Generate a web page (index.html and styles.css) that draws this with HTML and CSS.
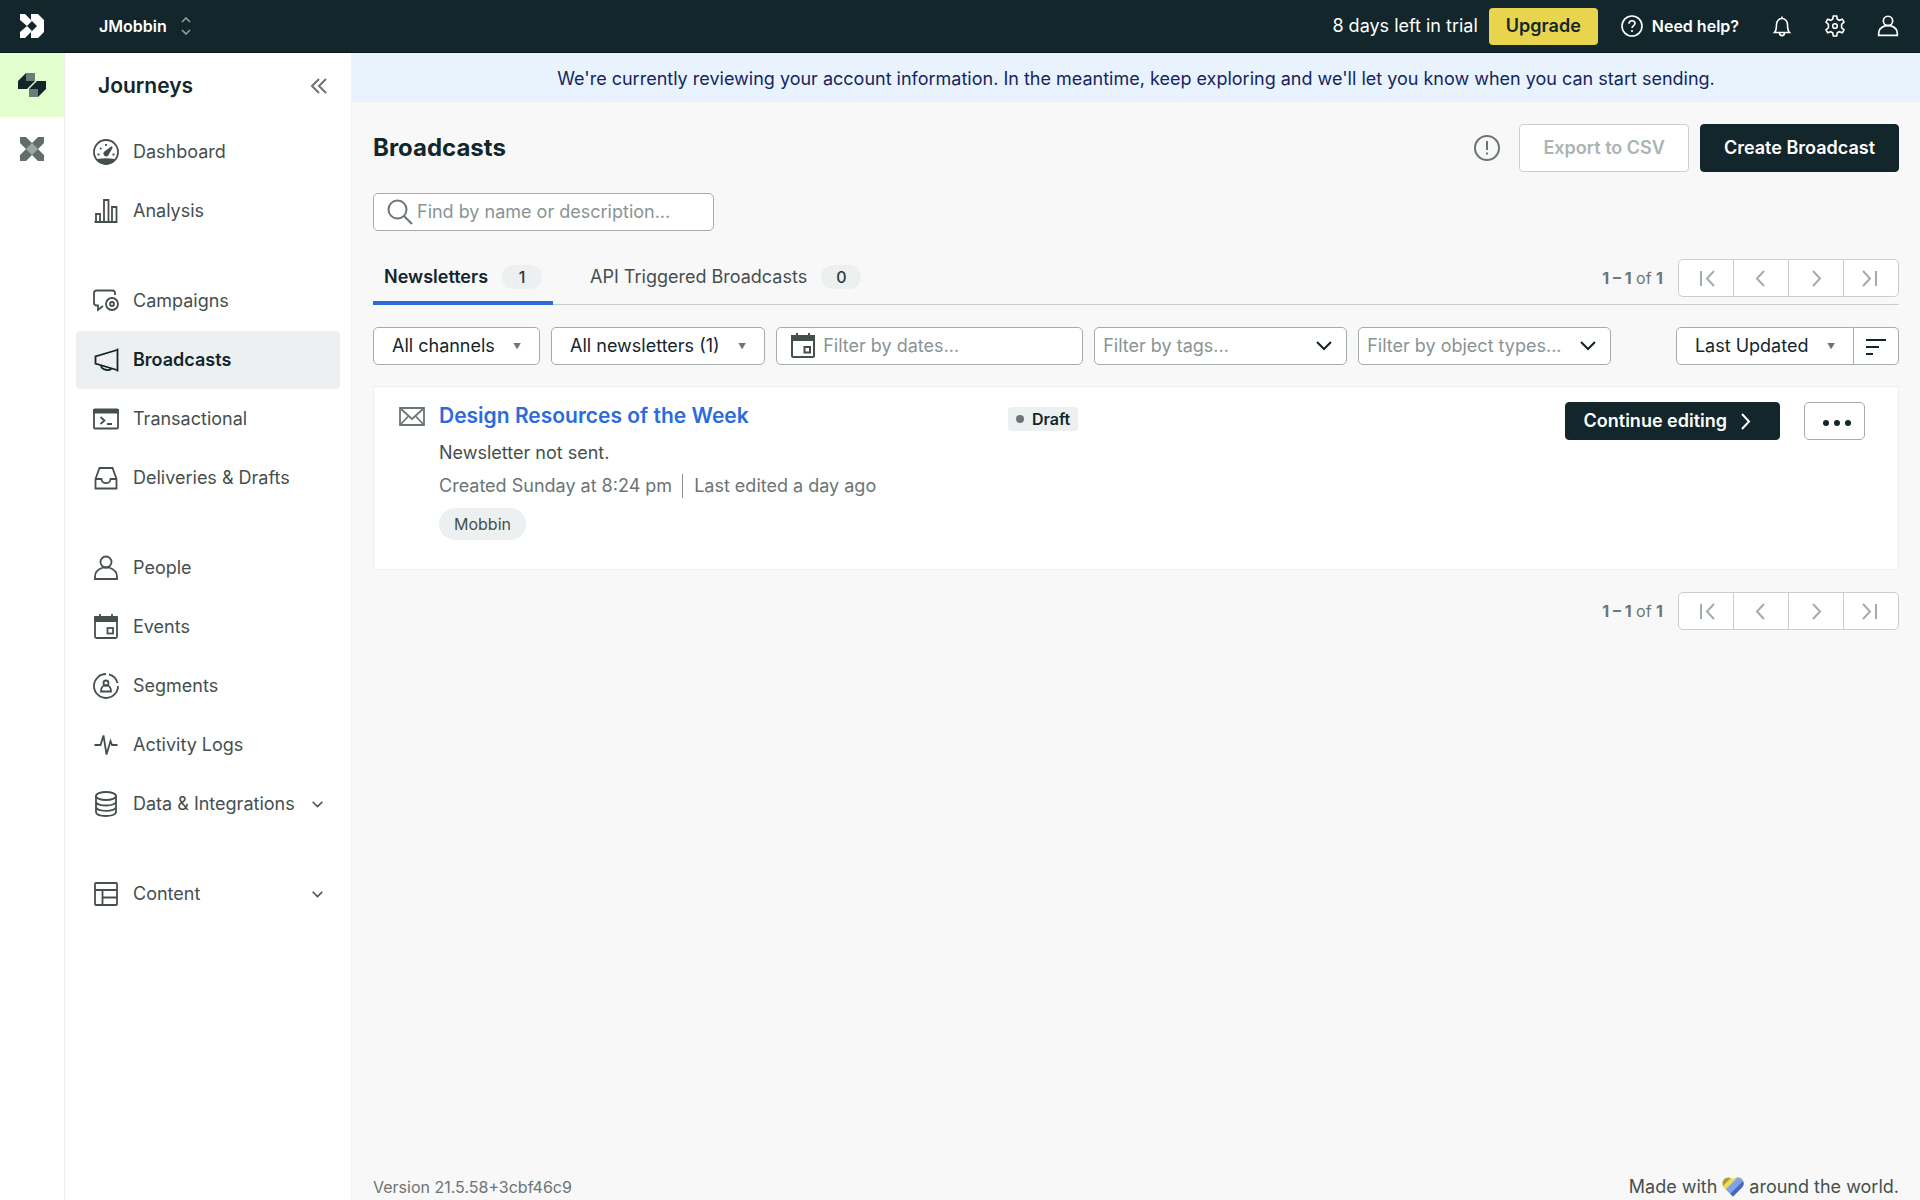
FILE: index.html
```html
<!DOCTYPE html>
<html lang="en">
<head>
  <meta charset="UTF-8" />
  <meta name="viewport" content="width=device-width, initial-scale=1" />
  <title>Broadcasts | Journeys</title>
  <link rel="stylesheet" href="styles.css">
</head>
<body>

  <!-- Shared icons -->
  <svg class="sprite" aria-hidden="true">
    <symbol id="i-person" viewBox="0 0 26 26"><circle cx="13" cy="7" r="5.500"/><path d="M2 24v-2.500c0-4 3.500-7.500 8-9h6c4.500 1.500 8 5 8 9V24z"/></symbol>
    <symbol id="i-calendar" viewBox="0 0 26 26"><rect x="2" y="3" width="22" height="21" rx="1.500"/><path d="M2 3h22v4H2zM7 0v3M19 0v3" fill="currentColor"/><rect x="14.500" y="14" width="5.500" height="5.500"/></symbol>
    <symbol id="i-down" viewBox="0 0 16 16"><path d="M1 4l7 7 7-7"/></symbol>
    <symbol id="i-first" viewBox="0 0 18 18"><path d="M4 2v15M17 2l-7 7.500 7 7.500"/></symbol>
    <symbol id="i-prev" viewBox="0 0 18 18"><path d="M12 2L5 9.500l7 7.500"/></symbol>
    <symbol id="i-next" viewBox="0 0 18 18"><path d="M6 2l7 7.500L6 17"/></symbol>
    <symbol id="i-last" viewBox="0 0 18 18"><path d="M1 2l7 7.500L1 17M14 2v15"/></symbol>
  </svg>

  <header class="topbar">
    <a class="logo" href="#" aria-label="Home">
      <svg width="24" height="24" viewBox="0 0 24 24" fill="currentColor"><path d="M0 0h5l7 7-5 5-7-6z"/><path d="M0 24h5l7-7-5-5-7 6z"/><path d="M11 0h7l6 6v12l-6 6h-7v-6l6-6-6-6z"/></svg>
    </a>
    <button class="workspace" type="button">JMobbin
      <svg class="icon thin" width="10" height="18" viewBox="0 0 10 18"><path d="M1 5l4-4 4 4M1 13l4 4 4-4"/></svg>
    </button>
    <div class="topbar-right">
      <span class="trial">8 days left in trial</span>
      <button class="upgrade" type="button">Upgrade</button>
      <a class="help" href="#">
        <svg class="icon" width="22" height="22" viewBox="0 0 22 22"><circle cx="11" cy="11" r="10"/><path d="M8 8.700c0-1.800 1.200-3 3-3s3 1.100 3 2.700c0 2-3 2.300-3 4.600M11 15v2"/></svg>
        Need help?
      </a>
      <button class="icon-btn" type="button" aria-label="Notifications">
        <svg class="icon" width="22" height="22" viewBox="0 0 22 22"><path d="M3.500 17.500h15c-2-2-2-4-2-8 0-3.500-2.500-6-5.500-6s-5.500 2.500-5.500 6c0 4 0 6-2 8zM11 1.500v2M8.500 18c0 3.500 5 3.500 5 0"/></svg>
      </button>
      <button class="icon-btn" type="button" aria-label="Settings">
        <svg class="icon" width="22" height="22" viewBox="0 0 22 22"><path d="M9.300 1h3.400l.6 3.200 2 1.100 3-1.100 1.700 3-2.400 2.100v3.400l2.400 2.100-1.700 3-3-1.100-2 1.100-.6 3.200H9.300l-.6-3.200-2-1.100-3 1.100-1.700-3 2.400-2.100V9.300L2 7.200l1.700-3 3 1.100 2-1.100z"/><circle cx="11" cy="11" r="2.300"/></svg>
      </button>
      <button class="icon-btn" type="button" aria-label="Account">
        <svg class="icon thick" width="22" height="22"><use href="#i-person"/></svg>
      </button>
    </div>
  </header>

  <div class="layout">
    <nav class="rail" aria-label="Products">
      <a class="rail-item active" href="#" aria-label="Journeys">
        <svg width="28" height="24" viewBox="0 0 28 24"><path d="M0 8l8-8h9v8l-8 8H0z" fill="#12262b"/><path d="M28 8H19l-8 8v8h9l8-8z" fill="#12262b"/><path d="M8 0h9v8H8zM11 16h9v8h-9z" fill="#6c7c78"/></svg>
      </a>
      <a class="rail-item" href="#" aria-label="Data Pipelines">
        <svg width="24" height="24" viewBox="0 0 24 24"><path d="M0 0h6l6 6 6-6h6v6l-6 6 6 6v6h-6l-6-6-6 6H0v-6l6-6-6-6z" fill="#626e6c"/><path d="M12 6l6 6-6 6-6-6z" fill="#9aa7a3"/></svg>
      </a>
    </nav>

    <aside class="sidebar">
      <div class="sidebar-head">
        <h2>Journeys</h2>
        <button class="icon-btn" type="button" aria-label="Collapse menu">
          <svg class="icon" width="18" height="18" viewBox="0 0 18 18"><path d="M9 2L2 9l7 7M16 2L9 9l7 7"/></svg>
        </button>
      </div>
      <nav class="menu">
        <div class="menu-group">
          <a class="menu-item" href="#"><svg class="icon" width="26" height="26" viewBox="0 0 26 26"><circle cx="13" cy="13" r="12"/><path d="M4.500 21c5-1 12-1 17 0-4.500 5-12.500 5-17 0z" fill="currentColor"/><path d="M19 8l-4.500 8a2 2 0 0 1-3-2.500z" fill="currentColor"/><path d="M4.500 15.500h2M19.500 15.500h2M7 9l1.500 1M13 5v2"/></svg>Dashboard</a>
          <a class="menu-item" href="#"><svg class="icon" width="26" height="26" viewBox="0 0 26 26"><path d="M1.500 24h23M3 24v-8h4v8M11 24V2h4.500v22M19 24V9h4.500v15"/></svg>Analysis</a>
        </div>
        <div class="menu-group">
          <a class="menu-item" href="#"><svg class="icon" width="26" height="26" viewBox="0 0 26 26"><path d="M22 7V5c0-1.500-1-2.500-2.500-2.500h-16C2 2.500 1 3.500 1 5v10c0 1.500 1 2.500 3 2.500h1V22l5-4"/><circle cx="19" cy="16" r="6"/><circle cx="19" cy="16" r="2"/></svg>Campaigns</a>
          <a class="menu-item active" href="#" aria-current="page"><svg class="icon" width="26" height="26" viewBox="0 0 26 26"><path d="M24.500 1.500v23M24 3L2.500 9.500v7L24 23M2.500 8.500v9M8 18c0 5.500 9 6 10.500 3.500"/></svg>Broadcasts</a>
          <a class="menu-item" href="#"><svg class="icon" width="26" height="26" viewBox="0 0 26 26"><rect x="1" y="3.500" width="24" height="19" rx="1"/><path d="M1 4h24v2.500H1z" fill="currentColor"/><path d="M7.500 11l4 3.500-4 3.500M14 18h5"/></svg>Transactional</a>
          <a class="menu-item" href="#"><svg class="icon" width="26" height="26" viewBox="0 0 26 26"><path d="M2.500 14L6.500 3h13l4 11v9.500h-21zM2.500 14h6c0 5.500 9 5.500 9 0h6"/></svg>Deliveries &amp; Drafts</a>
        </div>
        <div class="menu-group">
          <a class="menu-item" href="#"><svg class="icon" width="26" height="26"><use href="#i-person"/></svg>People</a>
          <a class="menu-item" href="#"><svg class="icon" width="26" height="26"><use href="#i-calendar"/></svg>Events</a>
          <a class="menu-item" href="#"><svg class="icon" width="26" height="26" viewBox="0 0 26 26"><path d="M13 1A12 12 0 1 0 25 13M16 1.400A12 12 0 0 1 24.500 10"/><circle cx="13" cy="10" r="2.500"/><path d="M8 18.500c0-3.500 1.500-5.500 3.500-6h3c2 .5 3.500 2.500 3.500 6z"/></svg>Segments</a>
          <a class="menu-item" href="#"><svg class="icon" width="26" height="26" viewBox="0 0 26 26"><path d="M1.500 13h6L10.500 3.500l3 19 4-13.500 1.500 4h5.500"/></svg>Activity Logs</a>
          <a class="menu-item" href="#"><svg class="icon" width="26" height="26" viewBox="0 0 26 26"><ellipse cx="13" cy="5" rx="10" ry="4"/><path d="M3 5v16c0 5.300 20 5.300 20 0V5M3 10.500c0 5.300 20 5.300 20 0M3 15.800c0 5.300 20 5.300 20 0"/></svg>Data &amp; Integrations<svg class="icon caret" width="11" height="11"><use href="#i-down"/></svg></a>
        </div>
        <div class="menu-group">
          <a class="menu-item" href="#"><svg class="icon" width="26" height="26" viewBox="0 0 26 26"><rect x="2" y="2" width="22" height="22" rx="1"/><path d="M2 9h22M9.500 9v15M9.500 16.500H24"/></svg>Content<svg class="icon caret" width="11" height="11"><use href="#i-down"/></svg></a>
        </div>
      </nav>
    </aside>

    <div class="page">
      <p class="notice">We're currently reviewing your account information. In the meantime, keep exploring and we'll let you know when you can start sending.</p>

      <main class="content">
        <div class="page-head">
          <h1>Broadcasts</h1>
          <svg class="icon info" width="26" height="26" viewBox="0 0 26 26"><circle cx="13" cy="13" r="12"/><path d="M13 6v9M13 17.500v2"/></svg>
          <button class="btn" type="button" disabled>Export to CSV</button>
          <button class="btn btn-dark" type="button">Create Broadcast</button>
        </div>

        <label class="field search">
          <svg class="icon" width="26" height="26" viewBox="0 0 26 26"><circle cx="10.500" cy="10.500" r="9"/><path d="M17 17l8 8"/></svg>
          <input type="text" placeholder="Find by name or description..." aria-label="Find by name or description" />
        </label>

        <div class="tabs">
          <button class="tab active" type="button">Newsletters <span class="count">1</span></button>
          <button class="tab" type="button">API Triggered Broadcasts <span class="count">0</span></button>
          <div class="pagination">
            <span><b>1 – 1</b> of <b>1</b></span>
            <div class="pager">
              <button type="button" aria-label="First page" disabled><svg class="icon" width="18" height="18"><use href="#i-first"/></svg></button>
              <button type="button" aria-label="Previous page" disabled><svg class="icon" width="18" height="18"><use href="#i-prev"/></svg></button>
              <button type="button" aria-label="Next page" disabled><svg class="icon" width="18" height="18"><use href="#i-next"/></svg></button>
              <button type="button" aria-label="Last page" disabled><svg class="icon" width="18" height="18"><use href="#i-last"/></svg></button>
            </div>
          </div>
        </div>

        <div class="filters">
          <label class="field drop"><select aria-label="Channels"><option>All channels</option></select><span class="arrow">▼</span></label>
          <label class="field drop"><select aria-label="Newsletters"><option>All newsletters (1)</option></select><span class="arrow">▼</span></label>
          <label class="field dates">
            <svg class="icon" width="26" height="26"><use href="#i-calendar"/></svg>
            <input type="text" placeholder="Filter by dates..." aria-label="Filter by dates" />
          </label>
          <label class="field combo"><input type="text" placeholder="Filter by tags..." aria-label="Filter by tags" /><svg class="icon" width="16" height="16"><use href="#i-down"/></svg></label>
          <label class="field combo"><input type="text" placeholder="Filter by object types..." aria-label="Filter by object types" /><svg class="icon" width="16" height="16"><use href="#i-down"/></svg></label>
          <div class="sort">
            <label class="field drop"><select aria-label="Sort by"><option>Last Updated</option></select><span class="arrow">▼</span></label>
            <button class="field sort-dir" type="button" aria-label="Sort direction"><svg class="icon" width="22" height="18" viewBox="0 0 22 18"><path d="M1 3h20M1 10h13M1 17h7"/></svg></button>
          </div>
        </div>

        <article class="card">
          <svg class="icon mail" width="26" height="19" viewBox="0 0 26 19"><path d="M1 1h24v17H1zM1 1l12 11L25 1M1 18l8.500-9M25 18l-8.500-9"/></svg>
          <div class="card-info">
            <h3><a href="#">Design Resources of the Week</a></h3>
            <p>Newsletter not sent.</p>
            <p class="meta"><span>Created Sunday at 8:24 pm</span><span>Last edited a day ago</span></p>
            <span class="tag">Mobbin</span>
          </div>
          <div class="card-status"><span class="status">Draft</span></div>
          <div class="card-actions">
            <button class="btn btn-dark btn-small" type="button">Continue editing <svg class="icon" width="18" height="18"><use href="#i-next"/></svg></button>
            <button class="field more" type="button" aria-label="More actions"><svg width="28" height="6" viewBox="0 0 28 6" fill="currentColor"><circle cx="3" cy="3" r="3"/><circle cx="14" cy="3" r="3"/><circle cx="25" cy="3" r="3"/></svg></button>
          </div>
        </article>

        <div class="pagination">
          <span><b>1 – 1</b> of <b>1</b></span>
          <div class="pager">
            <button type="button" aria-label="First page" disabled><svg class="icon" width="18" height="18"><use href="#i-first"/></svg></button>
            <button type="button" aria-label="Previous page" disabled><svg class="icon" width="18" height="18"><use href="#i-prev"/></svg></button>
            <button type="button" aria-label="Next page" disabled><svg class="icon" width="18" height="18"><use href="#i-next"/></svg></button>
            <button type="button" aria-label="Last page" disabled><svg class="icon" width="18" height="18"><use href="#i-last"/></svg></button>
          </div>
        </div>
      </main>

      <footer class="footer">
        <span class="version">Version 21.5.58+3cbf46c9</span>
        <span class="made">Made with
          <svg width="22" height="20" viewBox="0 0 22 20" role="img" aria-label="love">
            <clipPath id="heart"><path d="M11 19.500L1.600 10C-2.500 4.500 5-3.500 11 3c6-6.500 13.500 1.500 9.400 7z"/></clipPath>
            <g clip-path="url(#heart)"><path d="M0 0h22v20H0z" fill="#b39a3d"/><path d="M-2 12L14-4h12v28H-2z" fill="#f0dc4c"/><path d="M2 14L18-2h8v26H2z" fill="#7ea2ec"/><path d="M7 18L23 2v22H7z" fill="#4a68b0"/></g>
          </svg>
          around the world.</span>
      </footer>
    </div>
  </div>

</body>
</html>
```
FILE: styles.css
```css
* { box-sizing: border-box; }
body {
  margin: 0;
  min-height: 100vh;
  display: flex;
  flex-direction: column;
  font-family: Inter, "Liberation Sans", sans-serif;
  font-size: 18px;
  line-height: 24px;
  color: #12262b;
  background: #f8f8f8;
}
h1, h2, h3, p { margin: 0; }
a { color: inherit; text-decoration: none; }
button, input, select { font: inherit; color: inherit; }
button {
  padding: 0;
  border: none;
  background: none;
  cursor: pointer;
}
.sprite { display: none; }
svg { flex: none; }
.icon {
  fill: none;
  stroke: currentColor;
  stroke-width: 2;
}
.icon.thin { stroke-width: 1.5; }

/* Top bar */
.topbar {
  display: flex;
  align-items: center;
  height: 53px;
  padding-right: 21px;
  color: #fff;
  background: #12262b;
  border-bottom: 1px solid #0a171a;
}
.logo {
  width: 64px;
  display: flex;
  justify-content: center;
}
.workspace {
  display: flex;
  align-items: center;
  gap: 14px;
  padding-left: 35px;
  font-size: 16px;
  font-weight: 600;
}
.workspace .icon { color: #93a19f; }
.topbar-right {
  margin-left: auto;
  display: flex;
  align-items: center;
}
.topbar .icon { stroke-width: 1.6; }
.topbar .icon.thick { stroke-width: 2; }
.upgrade {
  height: 37px;
  margin-left: 11px;
  padding: 0 17px;
  border-radius: 4px;
  font-weight: 600;
  color: #12262b;
  background: #e8d44d;
}
.help {
  display: flex;
  align-items: center;
  gap: 9px;
  margin: 0 1px 0 23px;
  font-size: 16px;
  font-weight: 600;
}
.icon-btn { display: flex; }
.topbar .icon-btn { margin-left: 31px; }

.layout {
  flex: 1;
  display: flex;
}
.rail {
  width: 65px;
  background: #fff;
  border-right: 1px solid #eceff0;
}
.rail-item {
  height: 64px;
  display: flex;
  align-items: center;
  justify-content: center;
}
.rail-item.active { background: #e4ffce; }

/* Sidebar */
.sidebar {
  width: 287px;
  padding: 0 11px;
  background: #fff;
  border-right: 1px solid #f0f2f2;
}
.sidebar-head {
  display: flex;
  align-items: center;
  justify-content: space-between;
  height: 65px;
  margin-bottom: 5px;
  padding: 0 12px 0 22px;
}
.sidebar-head h2 {
  font-size: 21px;
  font-weight: 600;
}
.sidebar-head .icon-btn { color: #6b7574; }
.menu {
  display: flex;
  flex-direction: column;
  gap: 32px;
}
.menu-group {
  display: flex;
  flex-direction: column;
  gap: 1px;
}
.menu-item {
  display: flex;
  align-items: center;
  gap: 14px;
  height: 58px;
  padding: 0 17px;
  border-radius: 4px;
  color: #454f4e;
}
.menu-item .icon { stroke-width: 1.8; }
.menu-item.active {
  font-weight: 600;
  color: #12262b;
  background: #ecf0f1;
}
.menu-item .caret {
  margin-left: auto;
  stroke-width: 2.2;
}

.page {
  flex: 1;
  min-width: 0;
  display: flex;
  flex-direction: column;
}
.notice {
  padding: 14px 22px 11px;
  text-align: center;
  color: #17255f;
  background: #e8f3fe;
}
.content { padding: 22px 21px 0; }

.page-head {
  display: flex;
  align-items: center;
  gap: 11px;
}
.page-head h1 {
  margin-right: auto;
  font-size: 24px;
  font-weight: 700;
}
.info {
  margin-right: 8px;
  color: #6b7574;
}
.btn {
  height: 48px;
  padding: 0 23px;
  border: 1px solid #c9cfcf;
  border-radius: 4px;
  font-weight: 600;
  background: #fff;
}
.btn:disabled { color: #abb3b3; cursor: default; }
.btn-dark {
  color: #fff;
  background: #12262b;
  border-color: #12262b;
}
.btn-small {
  display: flex;
  align-items: center;
  gap: 9px;
  height: 38px;
  padding: 0 25px 0 18px;
}

/* Inputs and drop-downs share one box */
.field {
  display: flex;
  align-items: center;
  height: 38px;
  border: 1px solid #a4acac;
  border-radius: 5px;
  background: #fff;
}
.field input {
  flex: 1;
  min-width: 0;
  padding: 0;
  border: none;
  outline: none;
  background: none;
}
.field input::placeholder { color: #8a9494; opacity: 1; }
.search {
  width: 341px;
  margin-top: 21px;
  padding: 0 14px 0 13px;
  gap: 4px;
}
.search .icon { color: #6b7574; }

/* Tabs */
.tabs {
  display: flex;
  align-items: center;
  height: 74px;
  border-bottom: 1px solid #c9cfcf;
}
.tab {
  display: flex;
  align-items: center;
  gap: 14px;
  align-self: flex-end;
  height: 52px;
  margin-bottom: -1px;
  padding: 0 11px;
  border-bottom: 4px solid transparent;
  color: #454f4e;
}
.tab.active {
  font-weight: 600;
  color: #12262b;
  border-color: #2b6bdd;
}
.tab + .tab { margin-left: 26px; }
.count {
  min-width: 40px;
  padding: 0 15px;
  border-radius: 12px;
  font-size: 16px;
  font-weight: 500;
  text-align: center;
  color: #2b3a3c;
  background: #ecf0f1;
}
.pagination {
  display: flex;
  align-items: center;
  justify-content: flex-end;
  gap: 15px;
  font-size: 16px;
  color: #6b7574;
}
.pagination b { font-weight: 700; }
.tabs .pagination { margin: 28px 0 8px auto; }
.pager {
  display: flex;
  border: 1px solid #c9cfcf;
  border-radius: 5px;
  background: #fff;
}
.pager button {
  display: flex;
  align-items: center;
  justify-content: center;
  width: 54px;
  height: 36px;
  color: #a4acac;
}
.pager button + button {
  width: 55px;
  border-left: 1px solid #c9cfcf;
}

/* Filters */
.filters {
  display: flex;
  gap: 11px;
  margin: 22px 0 21px;
}
.drop select {
  padding: 0 0 0 18px;
  border: none;
  outline: none;
  appearance: none;
  background: none;
}
.arrow {
  padding: 0 18px;
  font-size: 8px;
  color: #6b7574;
}
.dates {
  flex: 0 1 307px;
  min-width: 0;
  gap: 7px;
  padding: 0 13px;
}
.dates .icon { color: #454f4e; }
.combo {
  flex: 0 1 253px;
  min-width: 0;
  padding: 0 14px 0 8px;
}
.sort {
  display: flex;
  margin-left: auto;
}
.sort .drop { border-radius: 5px 0 0 5px; }
.sort-dir {
  width: 45px;
  justify-content: center;
  border-left: none;
  border-radius: 0 5px 5px 0;
}

/* Broadcast row */
.card {
  display: flex;
  min-height: 184px;
  margin-bottom: 22px;
  padding: 15px 33px 28px 25px;
  border: 1px solid #eceff0;
  background: #fff;
}
.mail {
  margin: 5px 14px 0 0;
  color: #6b7574;
}
.mail.icon { stroke-width: 1.8; }
.card-info {
  flex: 0 1 569px;
  display: flex;
  flex-direction: column;
  align-items: flex-start;
  color: #454f4e;
}
.card-info h3 {
  margin-bottom: 11px;
  font-size: 21px;
  line-height: 28px;
  font-weight: 600;
  color: #2b6bdd;
}
.card-info .meta {
  display: flex;
  margin: 9px 0 10px;
  color: #6b7574;
}
.meta span + span {
  margin-left: 10px;
  padding-left: 11px;
  border-left: 1px solid #8a9494;
}
.tag {
  padding: 4px 15px;
  border-radius: 16px;
  font-size: 16px;
  background: #ecf0f1;
}
.card-status { padding-top: 5px; }
.status {
  display: flex;
  align-items: center;
  gap: 8px;
  padding: 0 8px;
  border-radius: 4px;
  font-size: 16px;
  font-weight: 600;
  background: #ecf0f1;
}
.status::before {
  content: "";
  width: 8px;
  height: 8px;
  border-radius: 50%;
  background: #6b7574;
}
.card-actions {
  display: flex;
  align-items: flex-start;
  gap: 24px;
  margin-left: auto;
}
.more {
  width: 61px;
  padding-top: 3px;
  padding-left: 5px;
  justify-content: center;
}

.footer {
  display: flex;
  align-items: center;
  justify-content: space-between;
  margin-top: auto;
  padding: 0 21px 1px;
  color: #454f4e;
}
.version {
  font-size: 16px;
  color: #6b7574;
}
.made {
  display: flex;
  align-items: center;
  gap: 5px;
}
```
